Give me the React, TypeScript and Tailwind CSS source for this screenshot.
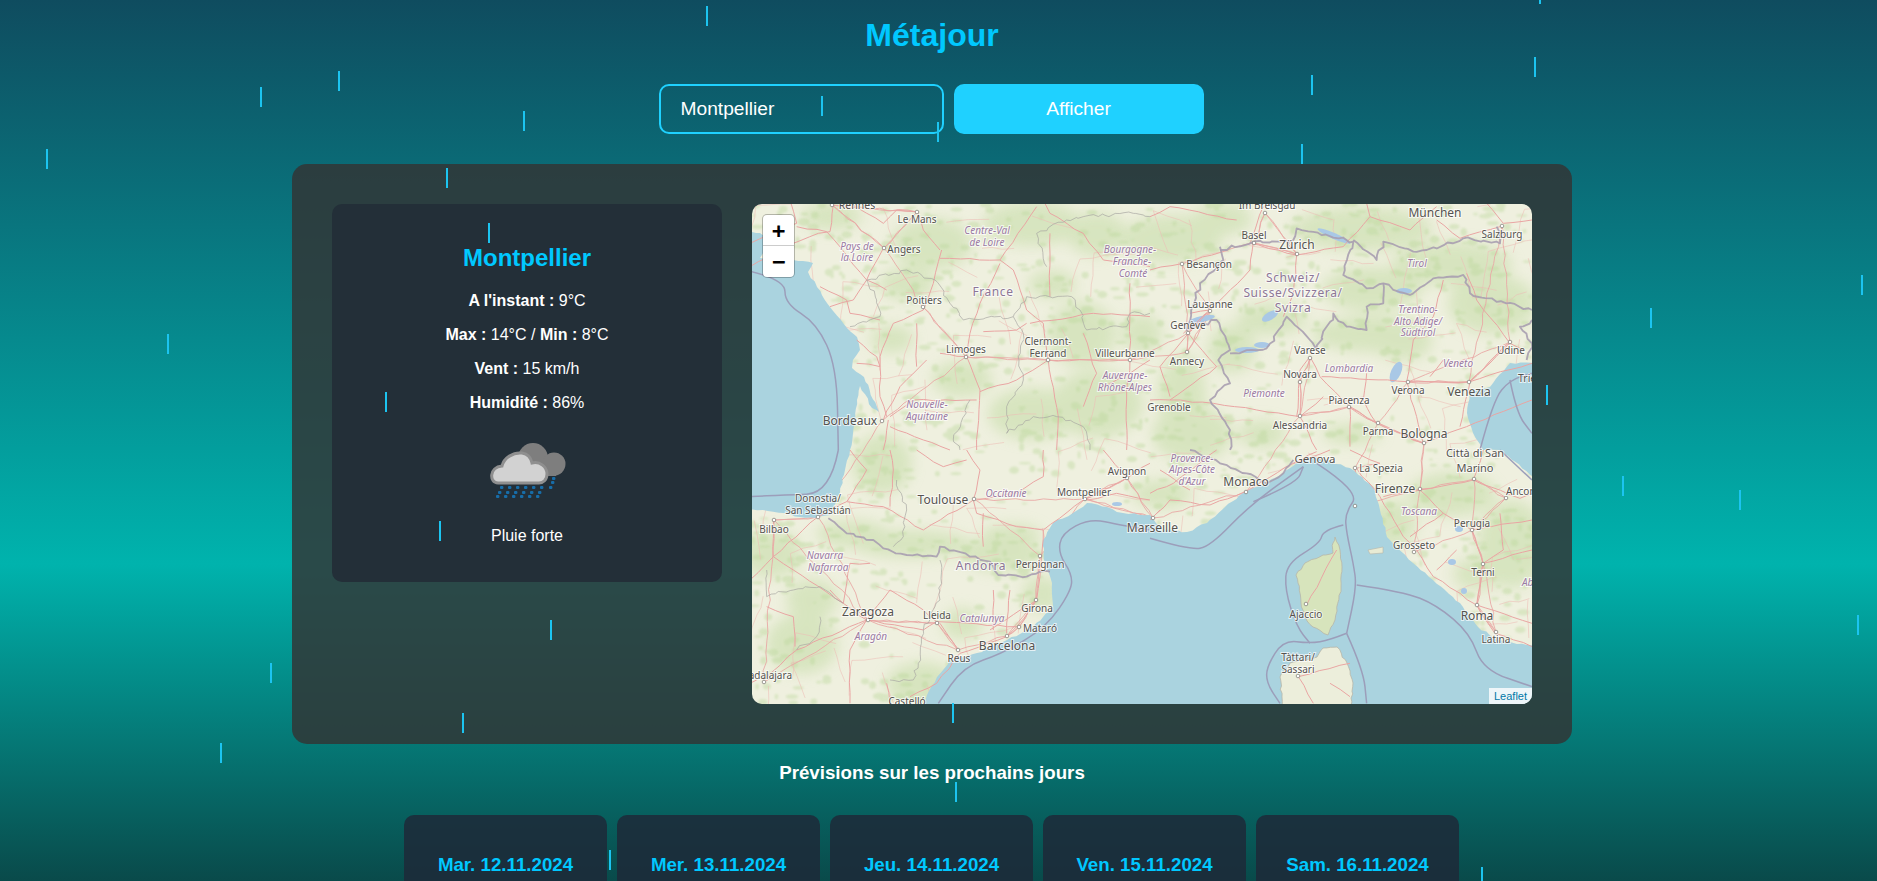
import React from 'react';

const drops: [number, number][] = [
  [706, 6], [1539, -16], [338, 71], [260, 87], [523, 111], [1534, 57], [1311, 75], [821, 96], [937, 122],
  [46, 149], [1301, 144], [446, 168], [488, 223], [1861, 275], [1650, 308], [167, 334], [1546, 385],
  [385, 392], [1622, 476], [1739, 490], [439, 521], [1857, 615], [550, 620], [270, 663], [952, 703],
  [462, 713], [220, 743], [955, 782], [609, 850], [1481, 867],
];

type Label = { t: string; x: number; y: number; s?: number; k?: 'region' | 'country'; a?: 'start' | 'end' };

const labels: Label[] = [
  { t: 'Rennes', x: 105, y: 1, s: 10.5 }, { t: 'Le Mans', x: 165, y: 15 },
  { t: 'Centre-Val', x: 235, y: 26, k: 'region' }, { t: 'de Loire', x: 235, y: 38, k: 'region' },
  { t: 'Pays de', x: 105, y: 42, k: 'region' }, { t: 'la Loire', x: 105, y: 53, k: 'region' },
  { t: 'Angers', x: 152, y: 45 }, { t: 'France', x: 241, y: 88, s: 12, k: 'country' },
  { t: 'Poitiers', x: 172, y: 96 }, { t: 'Limoges', x: 214, y: 145 },
  { t: 'Clermont-', x: 296, y: 137 }, { t: 'Ferrand', x: 296, y: 149 },
  { t: 'Villeurbanne', x: 373, y: 149 }, { t: 'Bourgogne-', x: 378, y: 45, k: 'region' },
  { t: 'Franche-', x: 380, y: 57, k: 'region' }, { t: 'Comté', x: 381, y: 69, k: 'region' },
  { t: 'Auvergne-', x: 373, y: 171, k: 'region' }, { t: 'Rhône-Alpes', x: 373, y: 183, k: 'region' },
  { t: 'Nouvelle-', x: 175, y: 200, k: 'region' }, { t: 'Aquitaine', x: 175, y: 212, k: 'region' },
  { t: 'Bordeaux', x: 98, y: 217, s: 12 },
  { t: 'Im Breisgau', x: 515, y: 1 }, { t: 'München', x: 683, y: 9, s: 12 }, { t: 'Basel', x: 502, y: 31 },
  { t: 'Zürich', x: 545, y: 41, s: 12 }, { t: 'Salzburg', x: 750, y: 30 }, { t: 'Besançon', x: 457, y: 60 },
  { t: 'Schweiz/', x: 541, y: 74, s: 12, k: 'country' }, { t: 'Suisse/Svizzera/', x: 541, y: 89, s: 12, k: 'country' },
  { t: 'Svizra', x: 541, y: 104, s: 12, k: 'country' }, { t: 'Tirol', x: 665, y: 59, k: 'region' },
  { t: 'Lausanne', x: 458, y: 100 }, { t: 'Trentino-', x: 666, y: 105, k: 'region' },
  { t: 'Alto Adige/', x: 666, y: 117, k: 'region' }, { t: 'Südtirol', x: 666, y: 128, k: 'region' },
  { t: 'Genève', x: 436, y: 121 }, { t: 'Annecy', x: 435, y: 157 }, { t: 'Varese', x: 558, y: 146 },
  { t: 'Udine', x: 759, y: 146 }, { t: 'Lombardia', x: 597, y: 164, k: 'region' }, { t: 'Veneto', x: 706, y: 159, k: 'region' },
  { t: 'Novara', x: 548, y: 170 }, { t: 'Verona', x: 656, y: 186 }, { t: 'Venezia', x: 717, y: 188, s: 12 },
  { t: 'Trieste', x: 766, y: 174, a: 'start', s: 10.5 }, { t: 'Piemonte', x: 512, y: 189, k: 'region' },
  { t: 'Grenoble', x: 417, y: 203 }, { t: 'Piacenza', x: 597, y: 196 }, { t: 'Alessandria', x: 548, y: 221 },
  { t: 'Parma', x: 626, y: 227 }, { t: 'Bologna', x: 672, y: 230, s: 12 },
  { t: 'Città di San', x: 723, y: 249, s: 11 }, { t: 'Marino', x: 723, y: 264, s: 11 },
  { t: 'Avignon', x: 375, y: 267 }, { t: 'Montpellier', x: 332, y: 288 }, { t: 'Toulouse', x: 191, y: 296, s: 12 },
  { t: 'Occitanie', x: 254, y: 289, k: 'region' }, { t: 'Donostia/', x: 66, y: 294 }, { t: 'San Sebastián', x: 66, y: 306 },
  { t: 'Bilbao', x: 22, y: 325 }, { t: 'Navarra', x: 73, y: 351, k: 'region' }, { t: 'Nafarroa', x: 76, y: 363, k: 'region' },
  { t: 'Andorra', x: 229, y: 362, s: 12, k: 'country' }, { t: 'Perpignan', x: 288, y: 360 }, { t: 'Zaragoza', x: 116, y: 408, s: 12 },
  { t: 'Lleida', x: 185, y: 411 }, { t: 'Catalunya', x: 230, y: 414, k: 'region' }, { t: 'Girona', x: 285, y: 404 },
  { t: 'Mataró', x: 288, y: 424 }, { t: 'Aragón', x: 119, y: 432, k: 'region' }, { t: 'Barcelona', x: 255, y: 442, s: 12 },
  { t: 'Reus', x: 207, y: 454 }, { t: 'Guadalajara', x: 40, y: 471, a: 'end' }, { t: 'Castelló', x: 155, y: 497 },
  { t: 'Provence-', x: 440, y: 254, k: 'region' }, { t: 'Alpes-Côte', x: 440, y: 265, k: 'region' }, { t: "d'Azur", x: 440, y: 277, k: 'region' },
  { t: 'Genova', x: 563, y: 255, s: 11.5 }, { t: 'La Spezia', x: 629, y: 264 }, { t: 'Monaco', x: 494, y: 278, s: 12 },
  { t: 'Firenze', x: 643, y: 285, s: 12 }, { t: 'Ancona', x: 754, y: 287, a: 'start' }, { t: 'Marseille', x: 426, y: 324, s: 12, a: 'end' },
  { t: 'Toscana', x: 667, y: 307, k: 'region' }, { t: 'Perugia', x: 720, y: 319 }, { t: 'Grosseto', x: 662, y: 341 },
  { t: 'Terni', x: 731, y: 368 }, { t: 'Abruzzo', x: 770, y: 378, a: 'start', k: 'region' }, { t: 'Ajaccio', x: 554, y: 410 },
  { t: 'Roma', x: 725, y: 412, s: 12 }, { t: 'Latina', x: 744, y: 435 }, { t: 'Tàttari/', x: 546, y: 453 }, { t: 'Sassari', x: 546, y: 465 },
];

// city dots, map coordinates
const dots: [number, number][] = [
  [80, 1], [165, 8], [132, 44], [171, 103], [214, 153], [296, 156], [378, 156], [130, 217], [513, 9], [502, 39], [545, 50],
  [750, 22], [430, 60], [458, 107], [436, 129], [435, 148], [558, 154], [758, 138], [548, 178], [656, 178], [717, 178],
  [597, 203], [548, 212], [626, 219], [672, 239], [722, 275], [375, 274], [333, 295], [222, 295], [66, 313], [22, 316],
  [288, 352], [116, 416], [185, 419], [284, 396], [267, 423], [255, 432], [206, 446], [12, 478], [494, 288], [603, 302],
  [668, 285], [720, 326], [662, 348], [731, 360], [754, 294], [725, 401], [744, 428], [554, 400], [546, 472], [401, 314],
  [603, 264],
];

let seed = 48271;
const rnd = () => {
  seed = (seed * 16807) % 2147483647;
  return seed / 2147483647;
};

const points = (d: string) => {
  const n = d.match(/-?\d+(\.\d+)?/g)!.map(Number);
  const out: [number, number][] = [];
  for (let i = 0; i < n.length; i += 2) out.push([n[i], n[i + 1]]);
  return out;
};

// break straight segments up so lines look hand surveyed rather than ruled
const wiggle = (d: string, amp: number, step: number, closed = false) => {
  const p = points(d);
  if (closed) p.push(p[0]);
  let out = `M${p[0][0]},${p[0][1]}`;
  for (let i = 1; i < p.length; i++) {
    const [ax, ay] = p[i - 1];
    const [bx, by] = p[i];
    const n = Math.max(1, Math.round(Math.hypot(bx - ax, by - ay) / step));
    for (let j = 1; j <= n; j++) {
      const off = j === n ? 0 : 1;
      const x = ax + ((bx - ax) * j) / n + off * (rnd() - 0.5) * amp;
      const y = ay + ((by - ay) * j) / n + off * (rnd() - 0.5) * amp;
      out += `L${x.toFixed(1)},${y.toFixed(1)}`;
    }
  }
  return closed ? out + 'Z' : out;
};

const smooth = (d: string) => {
  const p = points(d);
  let out = `M${p[0][0]},${p[0][1]}`;
  for (let i = 1; i < p.length - 1; i++) {
    const mx = (p[i][0] + p[i + 1][0]) / 2;
    const my = (p[i][1] + p[i + 1][1]) / 2;
    out += `Q${p[i][0]},${p[i][1]} ${mx},${my}`;
  }
  const last = p[p.length - 1];
  return `${out}L${last[0]},${last[1]}`;
};

const w = (list: string[], amp: number, step: number) => list.map((d) => wiggle(d, amp, step));

const roadsA = w([
  'M250,15L240,95L205,100L130,130L0,200', 'M300,10L400,70L440,30L502,35L520,90L570,150', 'M400,145L350,240L310,300L240,320',
  'M520,330L430,370L390,470L390,590L410,650', 'M520,330L550,250L575,150', 'M570,175L750,180L860,20', 'M650,470L570,460',
  'M750,190L690,310L660,400L650,470L690,570L680,750', 'M895,480L880,370L830,330L790,210L750,180', 'M895,480L1140,480',
  'M895,480L925,650L920,750', 'M400,660L450,560L530,480', 'M420,650L490,600L680,600', 'M690,575L800,540L895,480',
  'M840,370L1030,340L1200,350', 'M700,395L800,390L830,370', 'M880,0L900,40L1000,100L1060,180L1200,200',
  'M1130,750L1130,600L1140,480L1140,250', 'M900,100L900,290', 'M400,750L415,660', 'M140,80L230,95L350,240L410,270',
  'M210,260L290,300L300,340L390,360', 'M320,420L380,470L390,500L320,490', 'M500,370L500,500', 'M1000,400L1040,520L1000,620',
  'M420,680L520,720L600,750', 'M1200,480L1140,520L1060,560', 'M120,0L140,70L0,130',
], 5, 30);
const roadsB = w([
  'M0,210L100,190L300,130L440,165L580,140L660,50L650,10', 'M660,50L780,90L860,20', 'M860,60L930,115L1050,80', 'M120,340L180,330L300,210L310,125',
  'M115,400L170,340', 'M115,400L30,500L60,590', 'M440,165L430,280L400,350', 'M480,470L510,530L600,620L680,670L820,730',
  'M515,530L770,545L960,545L1146,490', 'M0,600L60,600L200,500L115,400', 'M60,600L190,610L320,630L450,650L520,590', 'M770,545L800,650L820,730',
  'M770,545L790,420L850,350L880,240', 'M960,545L1080,430L1120,450', 'M1080,430L980,300L950,220', 'M450,650L500,750', 'M820,730L950,680L1146,600',
  'M0,50L60,20L260,60', 'M340,20L300,130', 'M480,470L450,510L440,650', 'M650,520L640,600L680,670', 'M960,545L930,680',
  'M1010,10L1060,70L1146,60', 'M880,480L840,530', 'M180,330L100,400', 'M600,620L600,740',
], 5, 30);
const roadsC = w([
  'M670,150L520,240L400,170L290,155L205,200L70,320L0,390', 'M670,150L680,190L800,230L880,240L1000,150L1130,85L1200,40', 'M670,150L690,60L650,0',
  'M880,240L875,320L870,380L860,450L800,530L770,560L630,610', 'M350,510L420,420L520,480L560,515L800,530', 'M350,510L280,460L130,360L70,320',
  'M350,510L520,540L560,515', 'M350,510L300,600L300,760', 'M630,605L570,520', 'M350,510L140,600L40,690', 'M135,590L130,500L50,470', 'M20,690L0,700',
  'M410,700L420,760', 'M700,190L700,290', 'M420,170L430,60L420,0', 'M880,0L880,80L800,130L680,150', 'M1130,85L1060,0', 'M730,420L730,540',
  'M780,420L770,550', 'M300,0L350,60L290,155', 'M500,0L580,50L650,30', 'M1010,150L1100,130L1200,150', 'M70,210L70,320', 'M860,450L720,540',
  'M240,420L280,460L300,340L360,340', 'M480,740L560,700L630,610',
], 5, 30);
const roadsD = w([
  'M0,210L60,150L180,165L285,125L430,40L540,0', 'M0,210L30,180', 'M430,40L500,5', 'M620,55L690,140L760,260L800,300L850,380L980,465',
  'M810,120L700,140', 'M810,120L880,190L965,240L1000,340L980,465', 'M810,120L970,90L1000,0', 'M970,90L1110,145L1146,130', 'M965,240L1146,210',
  'M980,465L1146,520', 'M1000,340L1146,300', 'M980,465L1035,550L1146,590',
  'M30,60L120,120', 'M0,130L70,100L200,0', 'M600,0L690,40L620,55', 'M880,190L780,260', 'M1050,190L1060,300L1000,340', 'M920,300L860,360',
], 5, 30);
const islandRoads = w(['M445,680L600,640', 'M445,680L490,760', 'M540,700L600,740', 'M470,465L560,300'], 5, 30);

const regionsA = w([
  'M350,240L470,210L555,240L600,310L640,360L790,350L830,290L965,290L990,330L1010,390L1130,380L1140,340L1200,340',
  'M790,350L820,400L805,470L820,540L770,620L770,700L850,650L920,650L1000,680L1020,750',
  'M350,240L380,300L390,350L300,380',
  'M660,600L610,720L630,750',
  'M890,200L860,100L950,60L1000,50L1150,40L1200,50',
], 11, 14);
const regionsC = w(['M440,90L470,180L460,260L430,290', 'M570,330L570,450L520,540L505,640L490,690L420,690', 'M50,360L50,440L130,420L210,410L280,460', 'M140,600L200,560L210,500'], 11, 14);
const bordersB = w([
  'M210,140L220,180L150,250L110,390L200,360L240,450L205,480L240,550L180,600L240,690L240,750',
  'M210,150L310,125L430,120L440,85L610,125L580,225L650,265L700,250L730,270L780,285L850,235L940,225L960,280L1146,330',
  'M610,120L680,180L700,125L790,155L830,150L940,115L1050,130L1040,80',
  'M240,460L350,445L410,350L480,420L500,450L550,340L590,380L650,390L650,320L700,310L700,250',
  'M1146,360L1110,380L1146,430L1130,480',
], 12, 16);
const bordersC = w(['M235,205L290,250L370,270L400,295L470,315L560,320L570,290L660,320L720,335L745,375L830,380L870,365L900,365'], 10, 16);
const bordersD = w(['M120,0L210,40L290,70L350,100L400,70L430,30'], 10, 16);

const seaA = ['M5,215L105,240L105,310L200,370L260,500L265,750'].map(smooth);
const seaB = ['M990,750L1030,600L1080,540L1146,520', 'M1080,540L1100,640L1146,700'].map(smooth);
const seaC = [
  'M265,0L240,130L100,135L0,140',
  'M1200,240L1110,225L1020,205L935,250L925,310L965,370L965,420L890,530L760,610L640,650L565,760',
].map(smooth);
const seaD = [
  'M0,265L120,300L180,290L300,165L460,50',
  'M310,155L440,100L460,50',
  'M500,40L630,125L585,190L590,250L610,340L620,410L590,550',
  'M620,405L760,425L860,465L960,550L1000,660L1146,710',
  'M580,225L520,240L510,280L410,340L405,420L440,530L480,580',
  'M590,550L540,570L480,580L400,570L350,650L350,700L390,760',
  'M590,550L640,660L650,760',
  'M1050,0L1146,90',
].map(smooth);

// big soft relief patches
const greens: [number, number, number, number][] = [
  [180, 40, 40, 26], [80, 12, 30, 14], [280, 20, 50, 22], [345, 30, 30, 22], [420, 35, 50, 24], [470, 15, 30, 16], [610, 25, 70, 22],
  [700, 60, 60, 22], [620, 85, 50, 22], [520, 115, 35, 16], [480, 145, 24, 24], [620, 130, 60, 18], [740, 100, 44, 30], [650, 140, 30, 16],
  [330, 130, 34, 32], [345, 200, 46, 34], [280, 210, 44, 26], [210, 175, 30, 18], [140, 135, 22, 14], [130, 260, 30, 30], [440, 230, 40, 28],
  [390, 130, 20, 20], [430, 190, 24, 40], [100, 330, 36, 14], [160, 340, 60, 14], [250, 350, 40, 18], [20, 350, 30, 24], [50, 440, 36, 30],
  [170, 480, 36, 22], [210, 420, 20, 16], [290, 390, 20, 18], [640, 320, 24, 24], [700, 290, 44, 22], [760, 340, 34, 44], [725, 370, 24, 16],
  [155, 80, 28, 16], [300, 80, 24, 14], [60, 395, 26, 20], [600, 230, 30, 10], [410, 290, 30, 14], [510, 230, 24, 14], [260, 330, 30, 10],
];

// fine mottled vegetation, fewer on the plains
const isPlain = (x: number, y: number) =>
  (x > 90 && x < 230 && y > 385 && y < 470) || (x > 520 && x < 700 && y > 170 && y < 222) || (x > 290 && x < 400 && y > 285 && y < 330) || (x > 170 && x < 300 && y > 270 && y < 330);
const mottle: [number, number, number, number][] = [];
for (let i = 0; i < 1700; i++) {
  const x = rnd() * 780;
  const y = rnd() * 500;
  if (isPlain(x, y) && rnd() > 0.25) continue;
  mottle.push([x, y, 1.5 + rnd() * 5, 1 + rnd() * 3]);
}

// minor road mesh, the sea is painted over it
const minorRoads: string[] = [];
for (let gy = 0; gy < 520; gy += 38) {
  for (let gx = 0; gx < 800; gx += 38) {
    const x = gx + rnd() * 26;
    const y = gy + rnd() * 26;
    if (rnd() < 0.45) minorRoads.push(wiggle(`M${x},${y}L${x + 28 + rnd() * 24},${y - 14 + rnd() * 30}`, 3, 12));
    if (rnd() < 0.45) minorRoads.push(wiggle(`M${x},${y}L${x - 14 + rnd() * 30},${y + 28 + rnd() * 24}`, 3, 12));
  }
}

// links between towns
const landDots = dots.filter(([x, y]) => !(x > 530 && x < 610 && y > 330));
const links: string[] = [];
landDots.forEach(([x, y]) => {
  landDots
    .filter(([a, b]) => a !== x || b !== y)
    .sort((p, q) => Math.hypot(p[0] - x, p[1] - y) - Math.hypot(q[0] - x, q[1] - y))
    .slice(0, 2)
    .forEach(([a, b]) => links.push(wiggle(`M${x},${y}L${a},${b}`, 3, 10)));
});

const atlantic = wiggle('M-5,28 8,29 18,39 8,54 41,56 61,59 56,68 65,83 78,103 95,124 105,133 108,146 101,156 100,164 112,173 125,203 127,208 120,204 108,182 105,196 101,229 98,246 93,266 88,289 78,311 65,314 48,313 31,309 11,306 -5,306', 1.8, 5, true);
const med = wiggle('M170,510 175,491 185,473 198,456 225,449 255,436 281,423 301,403 300,379 293,359 291,336 301,319 321,309 335,299 355,303 371,309 398,311 412,326 435,328 455,319 473,303 491,289 515,279 538,264 555,253 575,256 598,264 621,283 628,306 635,333 661,359 681,376 708,399 726,423 745,436 790,443 790,510', 1.8, 5, true);
const adriatic = wiggle('M790,159 758,159 738,183 718,186 715,209 721,229 731,246 748,246 790,279', 1.5, 5, true);
const corsica = wiggle('M583,333 588,346 590,363 589,383 583,416 576,431 561,423 553,413 549,399 546,379 544,371 553,359 571,351 581,349 581,339', 1.6, 4, true);
const sardinia = wiggle('M571,444 585,443 595,459 601,479 598,510 531,510 528,473 538,459 565,453', 1.6, 4, true);
const elba = 'M616,346 631,343 631,349 618,350Z';

const Tile = ({ x, y, children }: { x: number; y: number; children: React.ReactNode }) => (
  <g transform={`translate(${x} ${y}) scale(0.3333)`}>{children}</g>
);

const Lines = ({ d, cls }: { d: string[]; cls: string }) => (
  <>
    {d.map((p, i) => (
      <path key={i} d={p} className={cls} fill="none" strokeLinejoin="round" />
    ))}
  </>
);

function MapDrawing() {
  const road = 'stroke-[#e9a5a3] [stroke-width:3]';
  const region = 'stroke-[#a8a7a2] [stroke-width:2.6] opacity-80';
  const border = 'stroke-[#a99fb0] [stroke-width:5.5] opacity-90';
  const sea = 'stroke-[#9c9eba] [stroke-width:4.5]';

  return (
    <svg viewBox="0 0 780 500" className="block w-full h-full">
      <defs>
        <filter id="soft" x="-30%" y="-30%" width="160%" height="160%">
          <feGaussianBlur stdDeviation="7" />
        </filter>
        <filter id="fine" x="0" y="0" width="100%" height="100%">
          <feGaussianBlur stdDeviation="1.1" />
        </filter>
      </defs>
      <rect width="780" height="500" fill="#eff0df" />
      <g filter="url(#soft)" fill="#c4dca6" opacity="0.55">
        {greens.map(([cx, cy, rx, ry]) => (
          <ellipse key={`${cx}-${cy}`} cx={cx} cy={cy} rx={rx} ry={ry} />
        ))}
      </g>
      <g filter="url(#fine)" fill="#bcd89c" opacity="0.42">
        {mottle.map(([cx, cy, rx, ry], i) => (
          <ellipse key={i} cx={cx} cy={cy} rx={rx} ry={ry} />
        ))}
      </g>
      <Lines d={minorRoads} cls="stroke-[#edbdb6] [stroke-width:0.7] opacity-80" />
      <Lines d={links} cls="stroke-[#e9a9a6] [stroke-width:0.9]" />

      <g fill="#aad3df">
        <path d={atlantic} />
        <path d={med} />
        <path d={adriatic} />
      </g>
      <path d={corsica} fill="#d7e4bc" stroke="#b7b6a8" strokeWidth="0.8" />
      <path d={sardinia} fill="#eceedb" stroke="#b7b6a8" strokeWidth="0.8" />
      <path d={elba} fill="#e8ebd4" stroke="#b7b6a8" strokeWidth="0.6" />

      {/* lakes */}
      <g fill="#a9c8e6">
        <ellipse cx="450" cy="115" rx="13" ry="3" transform="rotate(-12 450 115)" />
        <ellipse cx="582" cy="32" rx="18" ry="3" transform="rotate(24 582 32)" />
        <ellipse cx="518" cy="112" rx="9" ry="4" transform="rotate(-30 518 112)" />
        <ellipse cx="495" cy="146" rx="12" ry="3" />
        <ellipse cx="510" cy="141" rx="8" ry="3" />
        <ellipse cx="644" cy="168" rx="5" ry="11" transform="rotate(24 644 168)" />
        <ellipse cx="652" cy="87" rx="8" ry="3" />
        <ellipse cx="707" cy="325" rx="4" ry="3" />
        <ellipse cx="700" cy="358" rx="4" ry="3" />
        <ellipse cx="712" cy="387" rx="3" ry="3" />
        <ellipse cx="365" cy="300" rx="5" ry="2" />
      </g>

      <Tile x={-2} y={-4}>
        <Lines d={roadsA} cls={road} />
        <Lines d={regionsA} cls={region} />
        <Lines d={seaA} cls={sea} />
      </Tile>
      <Tile x={398} y={-4}>
        <Lines d={roadsB} cls={road} />
        <Lines d={bordersB} cls={border} />
        <Lines d={seaB} cls={sea} />
      </Tile>
      <Tile x={-2} y={246}>
        <Lines d={roadsC} cls={road} />
        <Lines d={regionsC} cls={region} />
        <Lines d={bordersC} cls={border} />
        <Lines d={seaC} cls={sea} />
      </Tile>
      <Tile x={398} y={246}>
        <Lines d={roadsD} cls={road} />
        <Lines d={islandRoads} cls={road} />
        <Lines d={bordersD} cls={border} />
        <Lines d={seaD} cls={sea} />
      </Tile>

      {dots.map(([x, y]) => (
        <circle key={`${x}-${y}`} cx={x} cy={y} r="1.8" fill="#fff" stroke="#77756f" strokeWidth="0.7" />
      ))}

      {labels.map((l) => (
        <text
          key={l.t}
          x={l.x}
          y={l.y + (l.s ?? 10) * 0.35}
          textAnchor={l.a ?? 'middle'}
          fontSize={l.s ?? 10}
          fontStyle={l.k === 'region' ? 'italic' : 'normal'}
          fill={l.k === 'region' ? '#9b7ba3' : l.k === 'country' ? '#8c7696' : '#55534f'}
          stroke="#ffffff"
          strokeOpacity="0.7"
          strokeWidth="2"
          letterSpacing={l.k === 'country' ? 0.6 : 0}
          className="[paint-order:stroke] font-['Noto_Sans',sans-serif]"
        >
          {l.t}
        </text>
      ))}
    </svg>
  );
}

function RainIcon() {
  const rows = [
    { y: 56, xs: [20, 28, 36, 44, 52, 60, 69] },
    { y: 61, xs: [18, 26, 34, 42, 50, 58] },
    { y: 65, xs: [16, 24, 32, 40, 48, 56] },
  ];
  return (
    <svg viewBox="0 0 100 70" className="w-[100px] h-[70px]">
      <g fill="#7e7e7e">
        <circle cx="53" cy="28" r="15" />
        <circle cx="74" cy="34" r="11.5" />
        <rect x="50" y="30" width="26" height="16" />
      </g>
      <path
        d="M18,53 C9,53 9,37 22,36 C24,28 33,22 42,23 C48,24 51,28 52,33 C60,31 67,37 67,44 C67,50 63,53 59,53 Z"
        fill="#d2d2d2"
        stroke="#8f8f8f"
        strokeWidth="3"
      />
      <g fill="#176da8">
        {rows.map((r) => r.xs.map((x) => <rect key={`${x}-${r.y}`} x={x} y={r.y} width="3.4" height="3" rx="1" />))}
        <rect x="72" y="47" width="3.4" height="3" rx="1" />
        <rect x="71" y="51" width="3.4" height="3" rx="1" />
      </g>
    </svg>
  );
}

const forecastDays = ['Mar. 12.11.2024', 'Mer. 13.11.2024', 'Jeu. 14.11.2024', 'Ven. 15.11.2024', 'Sam. 16.11.2024'];

export default function App() {
  return (
    <div className="relative h-[881px] overflow-hidden font-['Liberation_Sans',Arial,sans-serif] text-white bg-[linear-gradient(180deg,#0f4c5f_0%,#00b3ad_64%,#094a4a_100%)]">
      <div className="w-[1864px] flex flex-col items-center">
        <h1 className="mt-[17px] text-[32px] leading-[37px] font-bold text-[#00c8ff]">Métajour</h1>

        <div className="mt-[30px] mr-[2px] flex gap-[10px]">
          <input
            readOnly
            value="Montpellier"
            className="w-[285px] h-[50px] px-5 text-[19.2px] text-white bg-transparent border-2 border-[#1fd1ff] rounded-[10px] outline-none"
          />
          <button className="w-[250px] h-[50px] text-[19.2px] text-white bg-[#1fd1ff] rounded-[10px]">Afficher</button>
        </div>

        <div className="mt-[30px] w-[1280px] h-[580px] p-10 flex gap-[30px] items-start rounded-[15px] bg-[rgba(51,51,51,0.82)]">
          <div className="w-[390px] h-[378px] flex flex-col items-center rounded-[10px] bg-[#232f38] pt-[40px] text-[16px] leading-[18px]">
            <h2 className="text-[24px] leading-[28px] font-bold text-[#00c8ff]">Montpellier</h2>
            <p className="mt-[20px]"><b>A l'instant :</b> 9°C</p>
            <p className="mt-[16px]"><b>Max :</b> 14°C / <b>Min :</b> 8°C</p>
            <p className="mt-[16px]"><b>Vent :</b> 15 km/h</p>
            <p className="mt-[16px]"><b>Humidité :</b> 86%</p>
            <div className="mt-[18px] ml-[6px]">
              <RainIcon />
            </div>
            <p className="mt-[27px]">Pluie forte</p>
          </div>

          <div className="relative w-[780px] h-[500px] overflow-hidden rounded-[10px]">
            <MapDrawing />
            <div className="absolute left-[11px] top-[11px] w-[31px] rounded-[4px] bg-white shadow-[0_0_0_1px_rgba(0,0,0,0.25)] font-['DejaVu_Sans_Mono',monospace] text-black text-[22px] font-bold">
              <div className="h-[31px] flex items-center justify-center border-b border-[#ccc]">+</div>
              <div className="h-[31px] flex items-center justify-center">−</div>
            </div>
            <div className="absolute right-0 bottom-0 px-[5px] h-4 leading-4 text-[11px] text-[#0078a8] bg-white/80">Leaflet</div>
          </div>
        </div>

        <h3 className="mt-[17px] text-[18.72px] leading-[23px] font-bold">Prévisions sur les prochains jours</h3>

        <div className="mt-[31px] mr-px flex gap-[10px]">
          {forecastDays.map((d) => (
            <div key={d} className="w-[203px] h-[200px] pt-[39px] flex flex-col items-center rounded-[10px] bg-[rgba(29,41,56,0.85)]">
              <p className="text-[18.72px] leading-[21px] font-bold text-[#00c8ff]">{d}</p>
            </div>
          ))}
        </div>
      </div>

      {/* falling rain */}
      {drops.map(([x, y]) => (
        <span key={`${x}-${y}`} className="absolute w-[2px] h-[20px] bg-[#1cc4f0] pointer-events-none" style={{ left: x, top: y }} />
      ))}
    </div>
  );
}
